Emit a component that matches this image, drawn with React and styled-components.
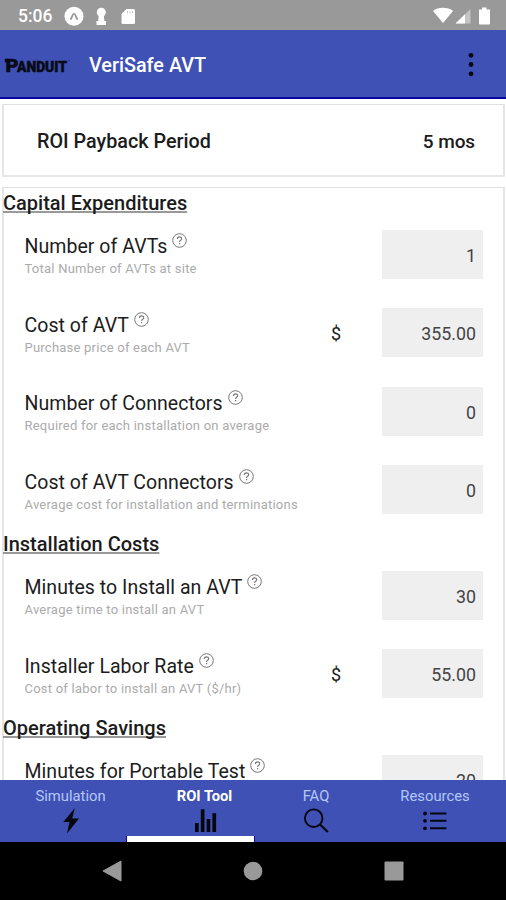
import React from "react";
import styled, { createGlobalStyle } from "styled-components";

const GlobalStyle = createGlobalStyle`
  * {
    box-sizing: border-box;
  }

  body {
    margin: 0;
    background: #fff;
    font-family: Roboto, "Liberation Sans", sans-serif;
    color: #1c1c1c;
  }
`;

const Screen = styled.div`
  display: flex;
  flex-direction: column;
  width: 506px;
  height: 900px;
  overflow: hidden;
`;

const StatusBar = styled.div`
  display: flex;
  flex: none;
  align-items: center;
  height: 30px;
  padding: 1px 14px 0 18px;
  background: #999;
  color: #fff;
`;

const Clock = styled.span`
  width: 46px;
  font-size: 17.5px;
  font-weight: 500;
  white-space: nowrap;
`;

const StatusIcons = styled.svg`
  display: block;
  margin-left: ${(props) => (props.$right ? "auto" : "0")};
`;

const Header = styled.header`
  display: flex;
  flex: none;
  align-items: center;
  height: 69px;
  padding: 2px 26px 0 4px;
  background: #3f51b5;
  border-bottom: 2px solid #0505a5;
`;

const Logo = styled.svg`
  display: block;
  width: 68px;
  height: 22px;
  overflow: visible;
`;

const AppTitle = styled.h1`
  flex: 1;
  margin: 0 0 0 17px;
  padding-top: 2px;
  font-size: 19.8px;
  font-weight: 500;
  color: #fff;
`;

const Content = styled.main`
  flex: 1;
  min-height: 0;
  padding: 5px 1px 0 2px;
  overflow: hidden;
`;

const Card = styled.section`
  border: 1px solid #dedfdf;
  border-left: 2px solid #e6e6e6;
  border-right: 2px solid #e6e6e6;
  background: #fff;
`;

const PaybackCard = styled(Card)`
  display: flex;
  align-items: center;
  justify-content: space-between;
  height: 73px;
  margin-bottom: 10px;
  padding: 2px 28px 0 33px;
  border-bottom: 2px solid #e6e6e6;
  font-weight: 500;
`;

const PaybackLabel = styled.span`
  font-size: 19.75px;
`;

const PaybackValue = styled.span`
  font-size: 19px;
  letter-spacing: -0.1px;
`;

const SectionTitle = styled.h2`
  height: 27px;
  margin: 0 0 0 -1px;
  font-size: 20px;
  font-weight: 500;
  line-height: 31px;
  text-decoration: underline;
  text-decoration-color: #999;
  text-decoration-thickness: 2px;
  text-decoration-skip-ink: none;
  text-underline-offset: 1px;
`;

const Row = styled.div`
  display: flex;
  align-items: center;
  height: 78.5px;
  padding: 0 20px 0 20.5px;
`;

const Labels = styled.div`
  flex: 1;
  padding-top: 3px;
  white-space: nowrap;
`;

const Label = styled.div`
  display: flex;
  align-items: flex-start;
  height: 26px;
  font-size: 19.5px;
  line-height: 28px;
  letter-spacing: 0.05px;
`;

const Hint = styled.div`
  font-size: 13px;
  line-height: 19px;
  letter-spacing: 0.23px;
  color: #ababab;
`;

const HelpIcon = styled.svg`
  display: block;
  margin: 0 0 0 5px;
`;

const Currency = styled.span`
  width: 51px;
  padding-top: 1px;
  font-size: 18px;
`;

const Input = styled.div`
  display: flex;
  align-items: center;
  justify-content: flex-end;
  width: 101px;
  height: 49px;
  padding: 2px 7px 0 0;
  background: #efefef;
  color: #444;
  font-size: 17.8px;
`;

const TabBar = styled.nav`
  position: relative;
  display: flex;
  flex: none;
  height: 62px;
  background: #3f51b5;
`;

const Tab = styled.div`
  display: flex;
  flex-direction: column;
  align-items: center;
  width: ${(props) => props.$width}px;
  padding-top: 7px;
  font-size: ${(props) => (props.$active ? 14.7 : 14.8)}px;
  line-height: 19px;
  font-weight: ${(props) => (props.$active ? 700 : 400)};
  color: ${(props) => (props.$active ? "#fff" : "#b3c7f9")};
`;

const TabIcon = styled.svg`
  display: block;
  margin-top: 1px;
`;

const Indicator = styled.div`
  position: absolute;
  left: 126px;
  bottom: 0;
  width: 129px;
  height: 6px;
  border: solid #0505a5;
  border-width: 0 1px;
  background: #fff;
`;

const SystemNav = styled.div`
  display: flex;
  flex: none;
  align-items: center;
  justify-content: space-between;
  height: 58px;
  padding: 0 102px;
  background: #000;
`;

const sections = [
  {
    title: "Capital Expenditures",
    rows: [
      { label: "Number of AVTs", hint: "Total Number of AVTs at site", value: "1" },
      { label: "Cost of AVT", hint: "Purchase price of each AVT", value: "355.00", money: true },
      { label: "Number of Connectors", hint: "Required for each installation on average", value: "0" },
      { label: "Cost of AVT Connectors", hint: "Average cost for installation and terminations", value: "0" },
    ],
  },
  {
    title: "Installation Costs",
    rows: [
      { label: "Minutes to Install an AVT", hint: "Average time to install an AVT", value: "30" },
      { label: "Installer Labor Rate", hint: "Cost of labor to install an AVT ($/hr)", value: "55.00", money: true },
    ],
  },
  {
    title: "Operating Savings",
    rows: [{ label: "Minutes for Portable Test", hint: "", value: "20" }],
  },
];

function Help() {
  return (
    <HelpIcon width="15" height="15" viewBox="0 0 15 15" fill="none" stroke="#777">
      <circle cx="7.5" cy="7.5" r="6.8" strokeWidth="1" />
      <path d="M5.4 5.9c0-2.7 4.3-2.7 4.3-.2 0 1.6-2.1 1.5-2.1 3.2" strokeWidth="1.1" />
      <path d="M7.6 10v1.3" strokeWidth="1.2" />
    </HelpIcon>
  );
}

function Field({ label, hint, value, money }) {
  return (
    <Row>
      <Labels>
        <Label>
          {label}
          <Help />
        </Label>
        <Hint>{hint}&nbsp;</Hint>
      </Labels>
      {money && <Currency>$</Currency>}
      <Input>{value}</Input>
    </Row>
  );
}

export default function App() {
  return (
    <Screen>
      <GlobalStyle />
      <StatusBar>
        <Clock>5:06</Clock>
        <StatusIcons width="73" height="22" viewBox="64 4 73 22" fill="#fff">
          <circle cx="74" cy="15.3" r="9.5" />
          <path d="M70.4 18.7c1.5-1.4 2-6 3.6-6s2.1 4.6 3.6 6" fill="none" stroke="#999" strokeWidth="1.8" />
          <circle cx="101.300" cy="11.300" r="4.500" />
          <path d="M98.800 14h5l.6 6h1.600v4h-9.500v-4h1.700z" />
          <path d="M126.500 8h7a1.500 1.500 0 0 1 1.500 1.500v12a1.500 1.500 0 0 1-1.500 1.500H123a1.500 1.500 0 0 1-1.500-1.500V13z" />
          <path d="M127.500 10v2.500M130 10v2.500M132.500 10v2.500" stroke="#ccc" strokeWidth="1" />
        </StatusIcons>
        <StatusIcons $right width="60" height="22" viewBox="432 4 60 22" fill="#fff">
          <path d="M433 10c5-4.300 15-4.300 20 0l-10 12z" />
          <path d="M470.500 8v14.500h-15z" fill="#c4c4c4" />
          <path d="M465 13.300v9.200h-9.500z" />
          <path d="M482 6.500h4.500v2H490v14a1 1 0 0 1-1 1h-9a1 1 0 0 1-1-1v-14h3z" />
        </StatusIcons>
      </StatusBar>

      <Header>
        <Logo viewBox="0 0 68 22" fill="#080a16" stroke="#080a16" strokeWidth="0.5">
          <text x="1.500" y="17.500" fontFamily="Roboto, sans-serif" fontSize="18" fontWeight="900" textLength="13" lengthAdjust="spacingAndGlyphs">
            P
          </text>
          <text x="13" y="17.500" fontFamily="Roboto, sans-serif" fontSize="15.500" fontWeight="900" textLength="50" lengthAdjust="spacingAndGlyphs">
            ANDUIT
          </text>
          <path d="M1 5h3v3H1z" />
          <circle cx="65" cy="6.500" r="0.600" opacity="0.400" />
        </Logo>
        <AppTitle>VeriSafe AVT</AppTitle>
        <svg width="18" height="26" viewBox="0 0 18 26" fill="#060810">
          <circle cx="9" cy="3.300" r="2.400" />
          <circle cx="9" cy="12.500" r="2.400" />
          <circle cx="9" cy="21.800" r="2.400" />
        </svg>
      </Header>

      <Content>
        <PaybackCard>
          <PaybackLabel>ROI Payback Period</PaybackLabel>
          <PaybackValue>5 mos</PaybackValue>
        </PaybackCard>
        <Card>
          {sections.map((section) => (
            <React.Fragment key={section.title}>
              <SectionTitle>{section.title}</SectionTitle>
              {section.rows.map((row) => (
                <Field key={row.label} {...row} />
              ))}
            </React.Fragment>
          ))}
        </Card>
      </Content>

      <TabBar>
        <Tab $width={141}>
          Simulation
          <TabIcon width="26" height="26" viewBox="0 0 26 26" fill="#05070f">
            <path d="M16.800 1L5.300 15h6.200l-2.500 11.500L21 11.500h-6.800z" />
          </TabIcon>
        </Tab>
        <Tab $width={127} $active>
          ROI Tool
          <TabIcon width="26" height="26" viewBox="0 0 26 26" fill="#05070f">
            <path d="M3 16h3.700v9H3zM8.800 2.300h3.700V25H8.800zM14.600 12h3.700v13h-3.700zM20.400 6.300h3.700V25h-3.700z" />
          </TabIcon>
        </Tab>
        <Tab $width={96}>
          FAQ
          <TabIcon width="26" height="26" viewBox="0 0 26 26" fill="none" stroke="#05070f" strokeWidth="1.900">
            <circle cx="10.700" cy="11.200" r="8.800" />
            <path d="M17 17.500L24.800 25" strokeWidth="2.300" />
          </TabIcon>
        </Tab>
        <Tab $width={142}>
          Resources
          <TabIcon width="26" height="26" viewBox="0 0 26 26" fill="#05070f">
            <circle cx="3" cy="6.500" r="1.900" />
            <circle cx="3" cy="13.800" r="1.900" />
            <circle cx="3" cy="21.300" r="1.900" />
            <path d="M8 5.500h16.300v2H8zM8 12.800h16.300v2H8zM8 20.300h16.300v2H8z" />
          </TabIcon>
        </Tab>
        <Indicator />
      </TabBar>

      <SystemNav>
        <svg width="20" height="22" viewBox="0 0 20 22" fill="#999">
          <path d="M1 11L19 1v20z" stroke="#999" strokeLinejoin="round" />
        </svg>
        <svg width="20" height="20" viewBox="0 0 20 20" fill="#999">
          <circle cx="10" cy="10" r="9.300" />
        </svg>
        <svg width="20" height="20" viewBox="0 0 20 20" fill="#999">
          <rect x="0.500" y="0.500" width="19" height="19" rx="1" />
        </svg>
      </SystemNav>
    </Screen>
  );
}
